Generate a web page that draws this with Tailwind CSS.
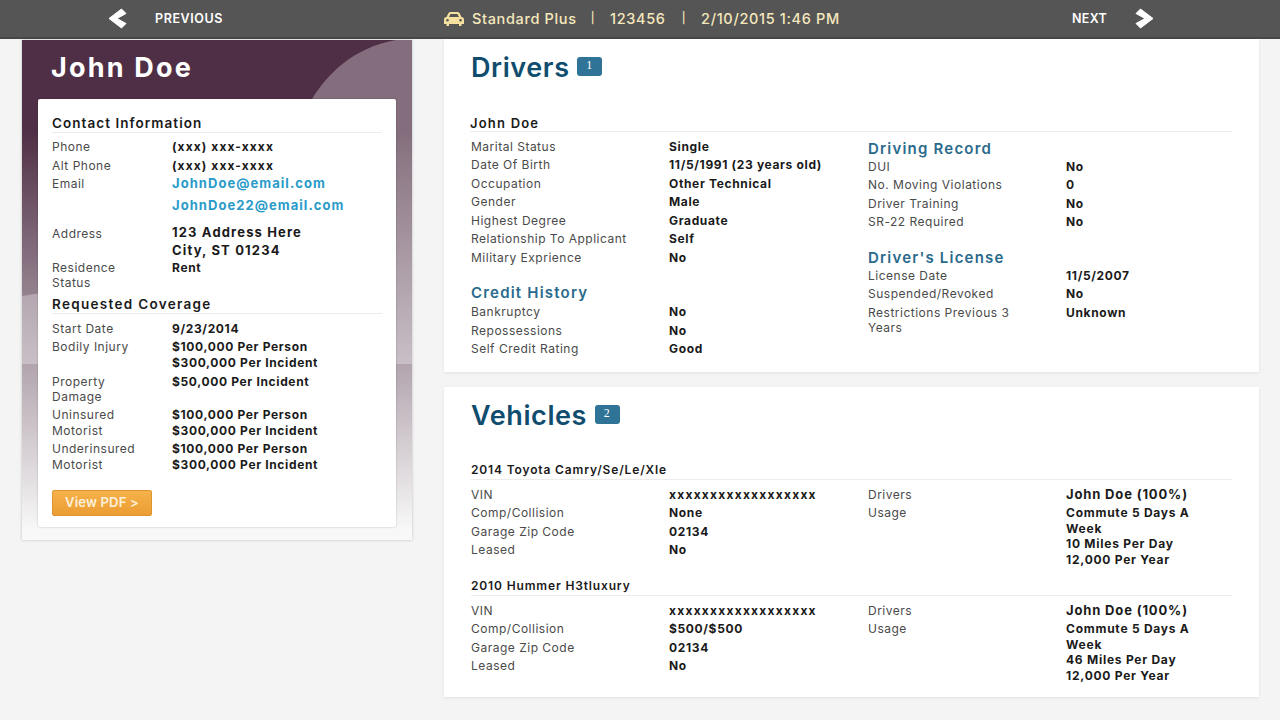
<!DOCTYPE html>
<html lang="en">
<head>
    <meta charset="UTF-8">
    <meta name="viewport" content="width=device-width, initial-scale=1.0">
    <title>Quote Details</title>
    <script src="https://cdn.jsdelivr.net/npm/@tailwindcss/browser@4"></script>
</head>
<body class="bg-[#f4f4f4] [font-family:Inter,sans-serif] text-[12px] leading-[15.5px] text-[#4a4a4a] h-[720px] overflow-hidden">
    <!-- Top bar -->
    <header class="h-[39px] bg-[#555555] border-b-2 border-[#474747] flex items-center">
        <div class="w-[444px] pl-[108px] flex items-center gap-[28px]">
            <svg width="19" height="21" viewBox="0 0 19 21"><path d="M1 10.500 13.500 1 18 5.500 9 10.500 18 15.500 13.500 20Z" fill="#fff" stroke="#fff" stroke-linejoin="round"/></svg>
            <span class="text-white font-semibold text-[12.500px] tracking-[0.6px]">PREVIOUS</span>
        </div>
        <div class="flex items-center text-[#f5e8bd] font-medium text-[14.500px] tracking-[0.65px] w-[628px]">
            <svg width="20" height="14" viewBox="0 0 20 14" class="mr-[8px]"><path fill="#f5e0a0" d="M4.5 1C5 .4 5.700 0 6.500 0h7c.8 0 1.500.4 2 1l2 4c1.500.3 2.500 1.200 2.500 2.500V12h-2.500v2H15v-2H5v2H2.500v-2H0V7.500C0 6.200 1 5.300 2.500 5zM5 5h10l-1.500-3h-7zM3.500 7a1.300 1.300 0 1 0 0 2.600 1.300 1.300 0 0 0 0-2.600zm13 0a1.300 1.300 0 1 0 0 2.600 1.300 1.300 0 0 0 0-2.600z"/></svg>
            <span>Standard Plus</span>
            <span class="ml-[14px] text-[11px]">|</span>
            <span class="ml-[15px]">123456</span>
            <span class="ml-[16px] text-[11px]">|</span>
            <span class="ml-[15px]">2/10/2015 1:46 PM</span>
        </div>
        <div class="flex items-center gap-[28px]">
            <span class="text-white font-semibold text-[12.500px] tracking-[0.3px]">NEXT</span>
            <svg width="19" height="21" viewBox="0 0 19 21"><path d="M18 10.500 5.500 1 1 5.500 10 10.500 1 15.500 5.500 20Z" fill="#fff" stroke="#fff" stroke-linejoin="round"/></svg>
        </div>
    </header>

    <main class="flex items-start pl-[22px] gap-[32px] tracking-[0.5px] [&_b]:font-bold [&_b]:tracking-[0.65px]">
        <!-- Applicant sidebar -->
        <aside class="relative w-[390px] h-[500px] mt-px shrink-0 bg-[linear-gradient(#4f2f45_18%,#f8f8f8_98%)] shadow-[0_0_3px_rgba(0,0,0,0.2)] pt-[59px] px-[16px]">
            <svg class="absolute left-0 top-0" width="390" height="324" viewBox="0 0 390 324"><path d="M374 0C330 8 305 35 290 59 250 130 130 240 0 256V324H390V0Z" fill="#fff" fill-opacity="0.3"/></svg>
            <h1 class="absolute left-[29px] top-[12px] text-white font-bold text-[27px] leading-[32px] tracking-[2.2px]">John Doe</h1>
            <div class="relative bg-white h-[428px] rounded-[2px] px-[14px] pt-[17px] shadow-[0_0_2px_rgba(0,0,0,0.25)]">
                <h3 class="font-semibold text-[13.500px] text-[#1a1a1a] tracking-[1.050px] border-b border-[#ececec] pb-px leading-[15px]">Contact Information</h3>
                <div class="mt-[6px] space-y-[3px]">
                    <div class="grid grid-cols-[120px_1fr]"><span>Phone</span><b class="text-[#1a1a1a] tracking-[1.1px]!">(xxx) xxx-xxxx</b></div>
                    <div class="grid grid-cols-[120px_1fr]"><span>Alt Phone</span><b class="text-[#1a1a1a] tracking-[1.1px]!">(xxx) xxx-xxxx</b></div>
                    <div class="grid grid-cols-[120px_1fr]"><span>Email</span><b class="text-[#2a9bc9] text-[13px] tracking-[1.050px]!">JohnDoe@email.com</b></div>
                    <div class="grid grid-cols-[120px_1fr] pt-[3.500px]"><span></span><b class="text-[#2a9bc9] text-[13px] tracking-[1.050px]!">JohnDoe22@email.com</b></div>
                    <div class="grid grid-cols-[120px_1fr] pt-[6px]"><span class="pt-[3px]">Address</span><b class="text-[#1a1a1a] text-[13px] leading-[18px] tracking-[1.150px]!">123 Address Here<br>City, ST 01234</b></div>
                    <div class="grid grid-cols-[120px_1fr] mt-[-2px]!"><span class="w-[90px]">Residence Status</span><b class="text-[#1a1a1a]">Rent</b></div>
                </div>
                <h3 class="mt-[6px] font-semibold text-[13.500px] text-[#1a1a1a] tracking-[1.300px] border-b border-[#ececec] pb-px leading-[15px]">Requested Coverage</h3>
                <div class="mt-[7px] space-y-[3px]">
                    <div class="grid grid-cols-[120px_1fr]"><span>Start Date</span><b class="text-[#1a1a1a]">9/23/2014</b></div>
                    <div class="grid grid-cols-[120px_1fr]"><span>Bodily Injury</span><b class="text-[#1a1a1a]">$100,000 Per Person<br>$300,000 Per Incident</b></div>
                    <div class="grid grid-cols-[120px_1fr] pt-px"><span class="w-[80px] leading-[15px]">Property Damage</span><b class="text-[#1a1a1a]">$50,000 Per Incident</b></div>
                    <div class="grid grid-cols-[120px_1fr]"><span class="w-[80px]">Uninsured Motorist</span><b class="text-[#1a1a1a]">$100,000 Per Person<br>$300,000 Per Incident</b></div>
                    <div class="grid grid-cols-[120px_1fr]"><span class="w-[90px]">Underinsured Motorist</span><b class="text-[#1a1a1a]">$100,000 Per Person<br>$300,000 Per Incident</b></div>
                </div>
                <button class="mt-[18px] w-[100px] h-[26px] rounded-[2px] bg-[linear-gradient(#f6b24a,#ec9c34)] border border-[#dd952f] text-[#fdf1dc] font-semibold text-[13px] tracking-[0.2px]">View PDF &gt;</button>
            </div>
        </aside>

        <div class="w-[815px]">
            <!-- Drivers -->
            <section class="bg-white h-[333px] px-[27px] shadow-[0_1px_3px_rgba(0,0,0,0.08)]">
                <div class="flex items-center gap-[7.500px] pt-[14px]">
                    <h2 class="text-[27px] leading-[30px] font-semibold text-[#0f4c6e] tracking-[0.6px]">Drivers</h2>
                    <span class="mt-[-4px] w-[25px] h-[19px] rounded-[3px] bg-[#2f7396] text-white text-[12px] flex items-center justify-center [font-family:'Liberation_Serif',serif]">1</span>
                </div>
                <h3 class="mt-[34px] ml-[-1px] font-semibold text-[13px] text-[#1a1a1a] tracking-[1.200px] border-b border-[#ececec] leading-[13.500px]">John Doe</h3>
                <div class="grid grid-cols-[397px_1fr]">
                    <div class="pt-[7px]">
                        <div class="space-y-[3px]">
                            <div class="grid grid-cols-[198px_1fr]"><span>Marital Status</span><b class="text-[#1a1a1a]">Single</b></div>
                            <div class="grid grid-cols-[198px_1fr]"><span>Date Of Birth</span><b class="text-[#1a1a1a]">11/5/1991 (23 years old)</b></div>
                            <div class="grid grid-cols-[198px_1fr]"><span>Occupation</span><b class="text-[#1a1a1a]">Other Technical</b></div>
                            <div class="grid grid-cols-[198px_1fr]"><span>Gender</span><b class="text-[#1a1a1a]">Male</b></div>
                            <div class="grid grid-cols-[198px_1fr]"><span>Highest Degree</span><b class="text-[#1a1a1a]">Graduate</b></div>
                            <div class="grid grid-cols-[198px_1fr]"><span>Relationship To Applicant</span><b class="text-[#1a1a1a]">Self</b></div>
                            <div class="grid grid-cols-[198px_1fr]"><span>Military Exprience</span><b class="text-[#1a1a1a]">No</b></div>
                        </div>
                        <h4 class="mt-[18px] mb-[1px] font-semibold text-[15px] leading-[20px] text-[#2a6a8c] tracking-[1.200px]">Credit History</h4>
                        <div class="space-y-[3px]">
                            <div class="grid grid-cols-[198px_1fr]"><span>Bankruptcy</span><b class="text-[#1a1a1a]">No</b></div>
                            <div class="grid grid-cols-[198px_1fr]"><span>Repossessions</span><b class="text-[#1a1a1a]">No</b></div>
                            <div class="grid grid-cols-[198px_1fr]"><span>Self Credit Rating</span><b class="text-[#1a1a1a]">Good</b></div>
                        </div>
                    </div>
                    <div class="pt-[7px]">
                        <h4 class="font-semibold text-[15px] leading-[20px] text-[#2a6a8c] tracking-[1.200px]">Driving Record</h4>
                        <div class="space-y-[3px]">
                            <div class="grid grid-cols-[198px_1fr]"><span>DUI</span><b class="text-[#1a1a1a]">No</b></div>
                            <div class="grid grid-cols-[198px_1fr]"><span>No. Moving Violations</span><b class="text-[#1a1a1a]">0</b></div>
                            <div class="grid grid-cols-[198px_1fr]"><span>Driver Training</span><b class="text-[#1a1a1a]">No</b></div>
                            <div class="grid grid-cols-[198px_1fr]"><span>SR-22 Required</span><b class="text-[#1a1a1a]">No</b></div>
                        </div>
                        <h4 class="mt-[18px] font-semibold text-[15px] leading-[20px] text-[#2a6a8c] tracking-[1.200px]">Driver's License</h4>
                        <div class="space-y-[3px]">
                            <div class="grid grid-cols-[198px_1fr]"><span>License Date</span><b class="text-[#1a1a1a]">11/5/2007</b></div>
                            <div class="grid grid-cols-[198px_1fr]"><span>Suspended/Revoked</span><b class="text-[#1a1a1a]">No</b></div>
                            <div class="grid grid-cols-[198px_1fr]"><span class="w-[165px]">Restrictions Previous 3 Years</span><b class="text-[#1a1a1a]">Unknown</b></div>
                        </div>
                    </div>
                </div>
            </section>

            <!-- Vehicles -->
            <section class="bg-white h-[310px] mt-[15px] px-[27px] shadow-[0_1px_3px_rgba(0,0,0,0.08)]">
                <div class="flex items-center gap-[7.500px] pt-[14px]">
                    <h2 class="text-[27px] leading-[30px] font-semibold text-[#0f4c6e] tracking-[0.6px]">Vehicles</h2>
                    <span class="mt-[-4px] w-[25px] h-[19px] rounded-[3px] bg-[#2f7396] text-white text-[12px] flex items-center justify-center [font-family:'Liberation_Serif',serif]">2</span>
                </div>
                <h3 class="mt-[32px] font-semibold text-[12px] text-[#1a1a1a] tracking-[0.850px] border-b border-[#ececec] pb-px leading-[14.500px]">2014 Toyota Camry/Se/Le/Xle</h3>
                <div class="grid grid-cols-[397px_1fr] pt-[7px]">
                    <div class="space-y-[3px]">
                        <div class="grid grid-cols-[198px_1fr]"><span>VIN</span><b class="text-[#1a1a1a] tracking-[1.250px]!">xxxxxxxxxxxxxxxxxx</b></div>
                        <div class="grid grid-cols-[198px_1fr]"><span>Comp/Collision</span><b class="text-[#1a1a1a]">None</b></div>
                        <div class="grid grid-cols-[198px_1fr]"><span>Garage Zip Code</span><b class="text-[#1a1a1a]">02134</b></div>
                        <div class="grid grid-cols-[198px_1fr]"><span>Leased</span><b class="text-[#1a1a1a]">No</b></div>
                    </div>
                    <div class="space-y-[3px]">
                        <div class="grid grid-cols-[198px_1fr]"><span>Drivers</span><b class="text-[#1a1a1a] text-[13px] tracking-[0.850px]!">John Doe (100%)</b></div>
                        <div class="grid grid-cols-[198px_1fr]"><span>Usage</span><b class="text-[#1a1a1a] w-[135px] tracking-[0.75px]!">Commute 5 Days A Week<br>10 Miles Per Day<br>12,000 Per Year</b></div>
                    </div>
                </div>
                <h3 class="mt-[12px] font-semibold text-[12px] text-[#1a1a1a] tracking-[0.850px] border-b border-[#ececec] pb-px leading-[14.500px]">2010 Hummer H3tluxury</h3>
                <div class="grid grid-cols-[397px_1fr] pt-[7px]">
                    <div class="space-y-[3px]">
                        <div class="grid grid-cols-[198px_1fr]"><span>VIN</span><b class="text-[#1a1a1a] tracking-[1.250px]!">xxxxxxxxxxxxxxxxxx</b></div>
                        <div class="grid grid-cols-[198px_1fr]"><span>Comp/Collision</span><b class="text-[#1a1a1a]">$500/$500</b></div>
                        <div class="grid grid-cols-[198px_1fr]"><span>Garage Zip Code</span><b class="text-[#1a1a1a]">02134</b></div>
                        <div class="grid grid-cols-[198px_1fr]"><span>Leased</span><b class="text-[#1a1a1a]">No</b></div>
                    </div>
                    <div class="space-y-[3px]">
                        <div class="grid grid-cols-[198px_1fr]"><span>Drivers</span><b class="text-[#1a1a1a] text-[13px] tracking-[0.850px]!">John Doe (100%)</b></div>
                        <div class="grid grid-cols-[198px_1fr]"><span>Usage</span><b class="text-[#1a1a1a] w-[135px] tracking-[0.75px]!">Commute 5 Days A Week<br>46 Miles Per Day<br>12,000 Per Year</b></div>
                    </div>
                </div>
            </section>
        </div>
    </main>
</body>
</html>
